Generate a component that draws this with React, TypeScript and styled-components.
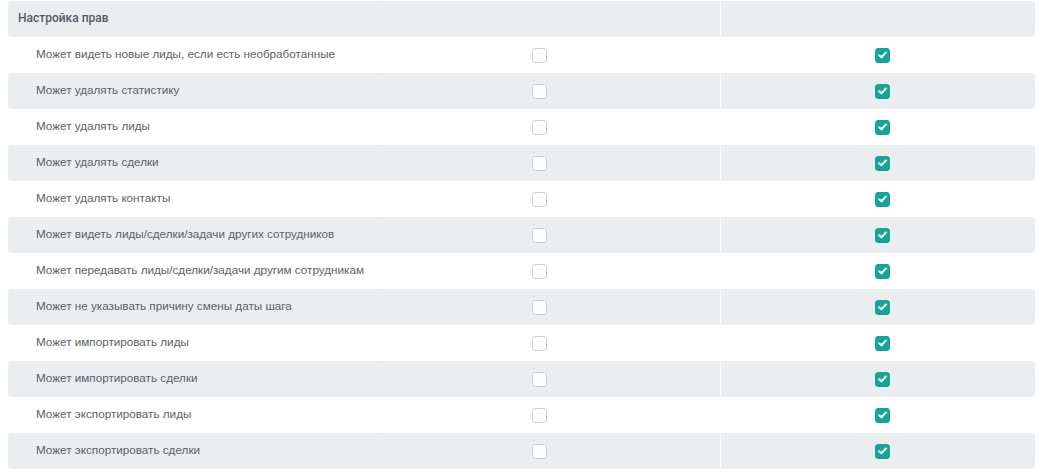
import React from "react";
import styled, { createGlobalStyle } from "styled-components";

const GlobalStyle = createGlobalStyle`
  body {
    margin: 0;
    background: #fff;
    font-family: "Liberation Sans", Arial, sans-serif;
  }
`;

const rights: { label: string; first: boolean; second: boolean }[] = [
  { label: "Может видеть новые лиды, если есть необработанные", first: false, second: true },
  { label: "Может удалять статистику", first: false, second: true },
  { label: "Может удалять лиды", first: false, second: true },
  { label: "Может удалять сделки", first: false, second: true },
  { label: "Может удалять контакты", first: false, second: true },
  { label: "Может видеть лиды/сделки/задачи других сотрудников", first: false, second: true },
  { label: "Может передавать лиды/сделки/задачи другим сотрудникам", first: false, second: true },
  { label: "Может не указывать причину смены даты шага", first: false, second: true },
  { label: "Может импортировать лиды", first: false, second: true },
  { label: "Может импортировать сделки", first: false, second: true },
  { label: "Может экспортировать лиды", first: false, second: true },
  { label: "Может экспортировать сделки", first: false, second: true },
];

export default function App() {
  return (
    <>
      <GlobalStyle />
      <Table>
        <Row $shaded>
          <HeadCell>Настройка прав</HeadCell>
          <Cell $divider="soft" />
          <Cell $divider="hard" />
        </Row>
        {rights.map((r, i) => (
          <Row key={r.label} $shaded={i % 2 === 1}>
            <LabelCell>{r.label}</LabelCell>
            <Cell $divider="soft">
              <Check checked={r.first} />
            </Cell>
            <Cell $divider="hard">
              <Check checked={r.second} />
            </Cell>
          </Row>
        ))}
      </Table>
    </>
  );
}

function Check({ checked }: { checked: boolean }) {
  return (
    <Box $checked={checked}>
      {checked && (
        <svg width="9" height="8" viewBox="0 0 9 8">
          <path
            d="M1.2 4.2 L3.5 6.3 L7.8 1.6"
            fill="none"
            stroke="#fff"
            strokeWidth="2"
            strokeLinecap="round"
            strokeLinejoin="round"
          />
        </svg>
      )}
    </Box>
  );
}

const Table = styled.div`
  width: 1027px;
  margin: 1px 0 0 8px;
`;

const Row = styled.div<{ $shaded?: boolean }>`
  display: grid;
  grid-template-columns: 370px 342px 315px;
  height: 36px;
  border-radius: 3px;
  background: ${(p) => (p.$shaded ? "#ebeef1" : "#fff")};
`;

const Cell = styled.div<{ $divider?: "soft" | "hard" }>`
  display: flex;
  align-items: center;
  padding-left: ${(p) => (p.$divider === "hard" ? "154px" : "153px")};
  border-left: 1px solid
    ${(p) => (p.$divider === "hard" ? "#ffffff" : "rgba(255,255,255,0.15)")};
`;

const HeadCell = styled.div`
  display: flex;
  align-items: center;
  padding: 0 0 3px 10px;
  font-family: Roboto, "Liberation Sans", Arial, sans-serif;
  font-size: 12px;
  font-weight: 500;
  color: #555a60;
`;

const LabelCell = styled.div`
  display: flex;
  align-items: center;
  padding: 0 0 3px 28px;
  font-size: 11.7px;
  color: #5d6167;
  white-space: nowrap;
`;

const Box = styled.span<{ $checked: boolean }>`
  width: 15px;
  height: 15px;
  box-sizing: border-box;
  border-radius: 3px;
  display: flex;
  align-items: center;
  justify-content: center;
  background: ${(p) => (p.$checked ? "#15a596" : "#fff")};
  border: 1px solid ${(p) => (p.$checked ? "#15a596" : "#cfd1d4")};
`;
